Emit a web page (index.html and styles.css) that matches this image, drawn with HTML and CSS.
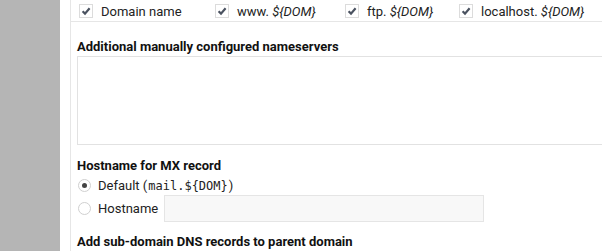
FILE: index.html
```html
<!DOCTYPE html>
<html lang="en">

<head>
    <meta charset="UTF-8">
    <meta name="viewport" content="width=device-width, initial-scale=1.0">
    <title>DNS options</title>
    <link rel="stylesheet" href="styles.css">
</head>

<body>
    <div class="sidebar"></div>

    <div class="main">
        <div class="panel">
            <div class="check-row">
                <label class="check"><span class="box"><svg viewBox="0 0 12 12"><path d="M2.6 6.2 L5 8.6 L9.6 3.2" /></svg></span><span>Domain name</span></label>
                <label class="check"><span class="box"><svg viewBox="0 0 12 12"><path d="M2.6 6.2 L5 8.6 L9.6 3.2" /></svg></span><span>www. <em>${DOM}</em></span></label>
                <label class="check"><span class="box"><svg viewBox="0 0 12 12"><path d="M2.6 6.2 L5 8.6 L9.6 3.2" /></svg></span><span>ftp. <em>${DOM}</em></span></label>
                <label class="check"><span class="box"><svg viewBox="0 0 12 12"><path d="M2.6 6.2 L5 8.6 L9.6 3.2" /></svg></span><span>localhost. <em>${DOM}</em></span></label>
            </div>

            <div class="field">
                <h3>Additional manually configured nameservers</h3>
                <textarea class="servers"></textarea>
            </div>

            <div class="field">
                <h3>Hostname for MX record</h3>
                <label class="radio-row">
                    <span class="radio checked"></span><span>Default (<code>mail.${DOM}</code>)</span>
                </label>
                <label class="radio-row">
                    <span class="radio"></span><span>Hostname</span>
                    <input type="text" class="hostname">
                </label>
            </div>

            <div class="field">
                <h3>Add sub-domain DNS records to parent domain</h3>
            </div>
        </div>
    </div>
</body>

</html>
```

FILE: styles.css
```css
body {
    font-family: Roboto, "Liberation Sans", Arial, sans-serif;
    font-size: 13px;
    color: #222;
    background-color: #fff;
    margin: 0;
    padding: 0;
    display: flex;
    height: 251px;
    overflow: hidden;
}

.sidebar {
    width: 60px;
    flex-shrink: 0;
    background-color: #b5b5b5;
}

.main {
    flex: 1;
    padding-left: 10px;
    min-width: 0;
    overflow: hidden;
}

.panel {
    border-left: 1px solid #e6e6e6;
    height: 100%;
    width: 700px;
}

.check-row {
    display: grid;
    grid-template-columns: 136px 130px 114px auto;
    padding: 4px 0 3px 8px;
    border-bottom: 1px solid #e6e6e6;
    line-height: 13px;
}

.check {
    display: flex;
    align-items: center;
    gap: 8px;
    white-space: nowrap;
}

.check em {
    font-style: italic;
}

.box {
    width: 12px;
    height: 12px;
    border: 1px solid #dcdcdc;
    background-color: #fff;
    display: inline-block;
}

.box svg {
    width: 12px;
    height: 12px;
    display: block;
}

.box path {
    fill: none;
    stroke: #4a5260;
    stroke-width: 2.2;
}

.field {
    padding-left: 6px;
}

h3 {
    font-size: 13px;
    font-weight: bold;
    color: #111;
    line-height: 16px;
    margin: 0;
}

.field:nth-of-type(2) h3 {
    margin-top: 17px;
    margin-bottom: 1px;
}

.servers {
    display: block;
    width: 620px;
    height: 87px;
    margin: 0;
    padding: 0;
    border: 1px solid #e2e2e2;
    resize: none;
}

.field:nth-of-type(3) h3 {
    margin-top: 13px;
    margin-bottom: 1px;
}

.radio-row {
    display: flex;
    align-items: center;
    height: 20px;
    white-space: nowrap;
    padding-left: 1px;
}

.radio-row + .radio-row {
    height: 27px;
}

.radio {
    width: 11px;
    height: 11px;
    border: 1px solid #d0d0d0;
    border-radius: 50%;
    margin-right: 7px;
    position: relative;
    background-color: #fff;
    flex-shrink: 0;
}

.radio.checked::after {
    content: "";
    position: absolute;
    left: 3px;
    top: 3px;
    width: 5px;
    height: 5px;
    border-radius: 50%;
    background-color: #444;
}

code {
    font-family: "DejaVu Sans Mono", monospace;
    font-size: 12px;
    padding: 0 1px;
}

.hostname {
    width: 318px;
    height: 25px;
    margin-left: 6px;
    padding: 0;
    border: 1px solid #e5e5e5;
    background-color: #f8f8f8;
}

.field:nth-of-type(4) h3 {
    margin-top: 12px;
}
```
